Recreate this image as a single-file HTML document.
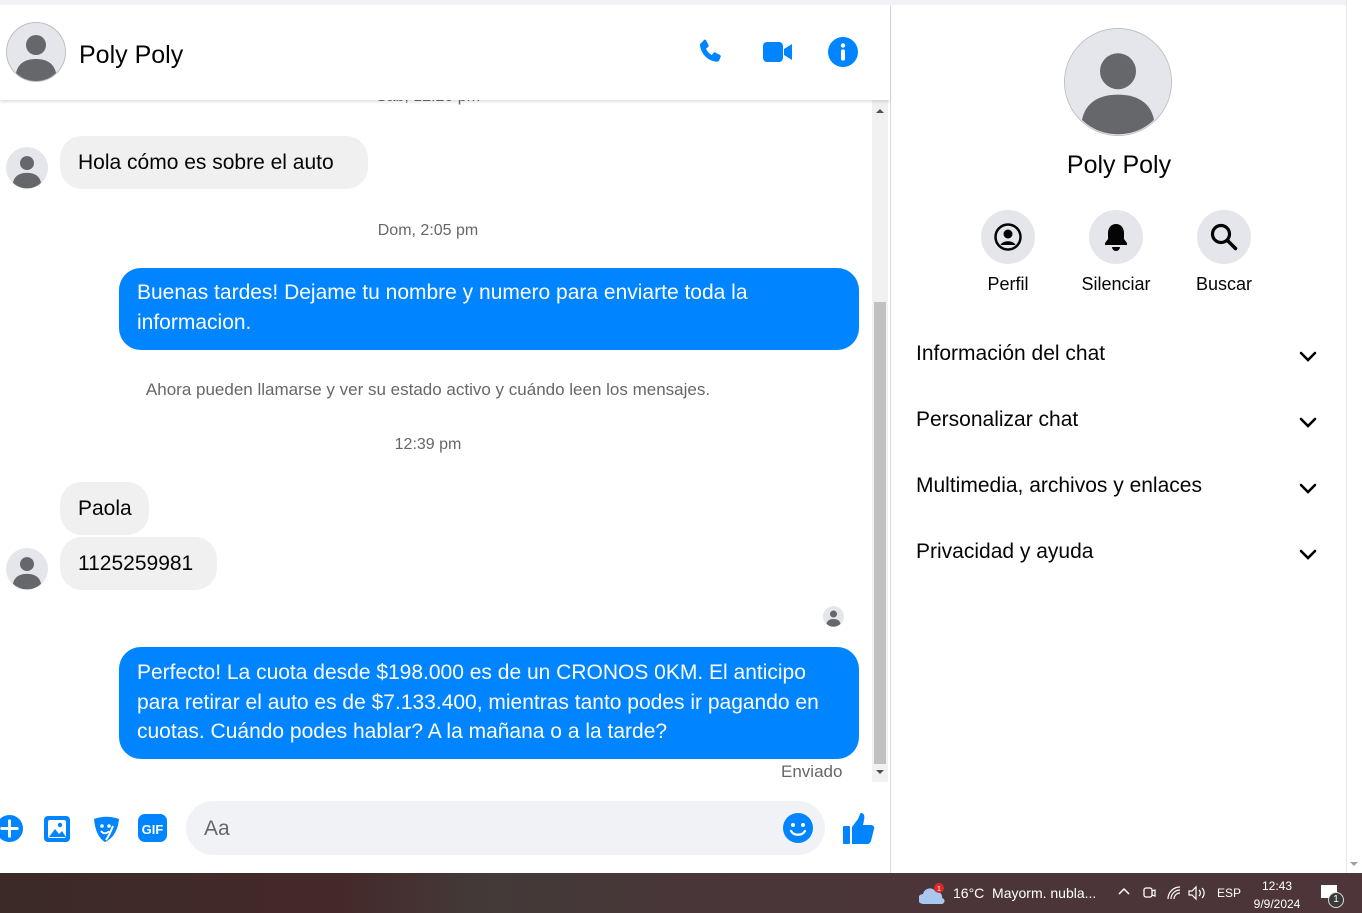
<!DOCTYPE html>
<html><head><meta charset="utf-8"><style>
*{box-sizing:border-box;margin:0;padding:0}
body{width:1362px;height:913px;overflow:hidden;background:#fff;font-family:"Liberation Sans",sans-serif;color:#050505;position:relative}
.abs{position:absolute}
.av{border-radius:50%;background:#c9ccd1;overflow:hidden}
.bub{position:absolute;border-radius:22px;font-size:21px;line-height:29.5px;padding:8px 18px}
.in{background:#f0f0f0;color:#050505}
.out{background:#0084ff;color:#fff}
.ts{position:absolute;font-size:16px;color:#65676b;width:100%;text-align:center}
.row{position:absolute;left:916px;width:402px;font-size:21px;font-weight:500}
.chev{position:absolute;right:0;top:4px}
.tb{position:absolute;color:#fff;font-size:14px}
</style></head><body>
<div class="abs" style="left:0;top:0;width:1346px;height:5px;background:#f0f2f5"></div>
<div class="abs" style="left:0;top:5px;width:890px;height:95px;background:#fff;box-shadow:0 2px 3px rgba(0,0,0,.12);z-index:2">
 <svg class="abs" style="left:6px;top:17px" width="60" height="60" viewBox="0 0 60 60"><circle cx="30" cy="30" r="30" fill="#bcc0c4"/><circle cx="30" cy="30" r="29" fill="#e4e6eb"/><circle cx="30" cy="23" r="10" fill="#65676b"/><path d="M10 51c2-10 10-14 20-14s18 4 20 14c-5 5-12 8-20 8s-15-3-20-8z" fill="#65676b"/></svg>
 <div class="abs" style="left:79px;top:36px;font-size:25px;font-weight:500">Poly Poly</div>
 <svg class="abs" style="left:696px;top:32px" width="30" height="30" viewBox="0 0 24 24"><path fill="#0084ff" d="M6.6 2.2c.6-.3 1.3 0 1.6.6l1.8 3.6c.3.6.1 1.2-.4 1.6L8 9.3c.9 2.3 2.5 4.1 4.7 5.1l1.2-1.6c.4-.5 1.1-.6 1.6-.3l3.6 1.8c.6.3.8 1 .6 1.6l-1 2.5c-.4 1-1.5 1.6-2.6 1.4C9.2 18.7 4.3 13.8 3.2 6.9c-.2-1.1.4-2.1 1.4-2.5z"/></svg>
 <svg class="abs" style="left:762px;top:34px" width="32" height="26" viewBox="0 0 32 26"><rect x="1" y="3" width="20" height="20" rx="4" fill="#0084ff"/><path d="M22 10l8-5v16l-8-5z" fill="#0084ff"/></svg>
 <svg class="abs" style="left:828px;top:32px" width="30" height="30" viewBox="0 0 30 30"><circle cx="15" cy="15" r="15" fill="#0084ff"/><circle cx="15" cy="8.5" r="2.2" fill="#fff"/><rect x="13" y="12.5" width="4" height="11" rx="1.5" fill="#fff"/></svg>
</div>
<div class="abs" style="left:0;top:100px;width:872px;height:682px;overflow:hidden">
 <div class="ts" style="top:-12px;left:-8px;font-weight:500">Sáb, 12:20 pm</div>
 <svg class="abs" style="left:6px;top:47px" width="42" height="42" viewBox="0 0 60 60"><circle cx="30" cy="30" r="30" fill="#e4e6eb"/><circle cx="30" cy="23" r="10" fill="#65676b"/><path d="M10 51c2-10 10-14 20-14s18 4 20 14c-5 5-12 8-20 8s-15-3-20-8z" fill="#65676b"/></svg>
 <div class="bub in" style="left:60px;top:36px;height:53px;padding-top:12px;width:308px">Hola cómo es sobre el auto</div>
 <div class="ts" style="top:122px;left:-8px;font-weight:500">Dom, 2:05 pm</div>
 <div class="bub out" style="left:119px;top:168px;width:740px;height:82px;padding-top:10px">Buenas tardes! Dejame tu nombre y numero para enviarte toda la informacion.</div>
 <div class="ts" style="top:280px;left:-8px;font-size:17px;color:#65676b;font-weight:500">Ahora pueden llamarse y ver su estado activo y cuándo leen los mensajes.</div>
 <div class="ts" style="top:336px;left:-8px;font-weight:500">12:39 pm</div>
 <div class="bub in" style="left:60px;top:382px;height:53px;padding-top:12px;width:89px">Paola</div>
 <svg class="abs" style="left:6px;top:448px" width="42" height="42" viewBox="0 0 60 60"><circle cx="30" cy="30" r="30" fill="#e4e6eb"/><circle cx="30" cy="23" r="10" fill="#65676b"/><path d="M10 51c2-10 10-14 20-14s18 4 20 14c-5 5-12 8-20 8s-15-3-20-8z" fill="#65676b"/></svg>
 <div class="bub in" style="left:60px;top:437px;height:53px;padding-top:12px;width:157px">1125259981</div>
 <svg class="abs" style="left:823px;top:506px" width="21" height="21" viewBox="0 0 60 60"><circle cx="30" cy="30" r="30" fill="#e4e6eb"/><circle cx="30" cy="23" r="10" fill="#65676b"/><path d="M10 51c2-10 10-14 20-14s18 4 20 14c-5 5-12 8-20 8s-15-3-20-8z" fill="#65676b"/></svg>
 <div class="bub out" style="left:119px;top:547px;width:740px;height:112px;padding-top:11px;padding-right:40px">Perfecto! La cuota desde $198.000 es de un CRONOS 0KM. El anticipo para retirar el auto es de $7.133.400, mientras tanto podes ir pagando en cuotas. Cuándo podes hablar? A la mañana o a la tarde?</div>
 <div class="abs" style="left:781px;top:662px;font-size:17px;color:#65676b">Enviado</div>
</div>
<div class="abs" style="left:872px;top:100px;width:16px;height:682px;background:#f1f1f1"></div>
<div class="abs" style="left:874px;top:302px;width:12px;height:462px;background:#c1c1c1"></div>
<div class="abs" style="left:876px;top:105px;width:0;height:0;border:4px solid transparent;border-bottom-color:#505050"></div>
<div class="abs" style="left:876px;top:770px;width:0;height:0;border:4px solid transparent;border-top-color:#505050"></div>
<svg class="abs" style="left:-5px;top:814px" width="29" height="29" viewBox="0 0 30 30"><circle cx="15" cy="15" r="14" fill="#0084ff"/><path d="M15 7v16M7 15h16" stroke="#fff" stroke-width="3" stroke-linecap="round"/></svg>
<svg class="abs" style="left:43px;top:813px" width="30" height="31" viewBox="0 0 30 31"><rect x="1" y="3" width="26" height="26" rx="4" fill="#0084ff"/><rect x="5" y="7" width="18" height="18" rx="2" fill="#fff"/><path d="M6 24l6-8 4 5 3-3 4 6z" fill="#0084ff"/><circle cx="17" cy="12" r="2.2" fill="#0084ff"/></svg>
<svg class="abs" style="left:91px;top:814px" width="30" height="30" viewBox="0 0 30 30"><path d="M3 5c8-3 17-3 25 0-1 10-5 19-14 23C7 24 4 15 3 5z" fill="#0084ff"/><circle cx="11" cy="12" r="1.8" fill="#fff"/><circle cx="18" cy="12" r="1.8" fill="#fff"/><path d="M10 17c2 3 6 3 8 0M22 12c-2 5-4 10-7 14" stroke="#fff" stroke-width="2" fill="none"/></svg>
<svg class="abs" style="left:138px;top:814px" width="30" height="29" viewBox="0 0 30 29"><rect x="0" y="0" width="29" height="28" rx="7" fill="#0084ff"/><text x="14.5" y="20" font-family="Liberation Sans" font-weight="bold" font-size="13" fill="#fff" text-anchor="middle">GIF</text></svg>
<div class="abs" style="left:186px;top:801px;width:639px;height:54px;border-radius:27px;background:#f0f2f5"></div>
<div class="abs" style="left:204px;top:817px;font-size:21px;color:#65676b">Aa</div>
<svg class="abs" style="left:782px;top:812px" width="32" height="32" viewBox="0 0 32 32"><circle cx="16" cy="16" r="15" fill="#0084ff"/><circle cx="11" cy="13" r="2" fill="#fff"/><circle cx="21" cy="13" r="2" fill="#fff"/><path d="M9 19c3 5 11 5 14 0" stroke="#fff" stroke-width="2.2" fill="none" stroke-linecap="round"/></svg>
<svg class="abs" style="left:842px;top:812px" width="34" height="34" viewBox="0 0 34 34"><rect x="1" y="14" width="7" height="18" rx="1" fill="#0084ff"/><path d="M10 15l6-8c1-2 2-6 3-6 3 0 4 3 3 7l-1 5h8c2 0 4 2 3 4l-3 12c-1 2-2 3-4 3H10z" fill="#0084ff"/></svg>
<div class="abs" style="left:890px;top:5px;width:1px;height:868px;background:#dadde1"></div>
<svg class="abs" style="left:1064px;top:28px" width="108" height="108" viewBox="0 0 60 60"><circle cx="30" cy="30" r="30" fill="#bcc0c4"/><circle cx="30" cy="30" r="29.5" fill="#e4e6eb"/><circle cx="30" cy="24" r="10" fill="#65676b"/><path d="M10 51c2-10 10-14 20-14s18 4 20 14c-5 5-12 8-20 8s-15-3-20-8z" fill="#65676b"/></svg>
<div class="abs" style="left:892px;top:151px;width:454px;text-align:center;font-size:25px;font-weight:500">Poly Poly</div>
<div class="abs av" style="left:981px;top:210px;width:54px;height:54px;background:#e4e6eb"></div>
<svg class="abs" style="left:993px;top:222px" width="30" height="30" viewBox="0 0 30 30"><circle cx="15" cy="15" r="12.5" fill="none" stroke="#050505" stroke-width="2.5"/><circle cx="15" cy="12" r="4.5" fill="#050505"/><path d="M7.5 23c2-5 13-5 15 0" fill="#050505"/></svg>
<div class="abs" style="left:981px;top:274px;width:54px;text-align:center;font-size:18px">Perfil</div>
<div class="abs av" style="left:1089px;top:210px;width:54px;height:54px;background:#e4e6eb"></div>
<svg class="abs" style="left:1102px;top:222px" width="28" height="30" viewBox="0 0 28 30"><path d="M14 2c-5 0-8 4-8 9v6l-3 4v2h22v-2l-3-4v-6c0-5-3-9-8-9z" fill="#050505"/><path d="M10 25a4 4 0 008 0z" fill="#050505"/></svg>
<div class="abs" style="left:1066px;top:274px;width:100px;text-align:center;font-size:18px">Silenciar</div>
<div class="abs av" style="left:1197px;top:210px;width:54px;height:54px;background:#e4e6eb"></div>
<svg class="abs" style="left:1209px;top:222px" width="30" height="30" viewBox="0 0 30 30"><circle cx="12" cy="12" r="8.5" fill="none" stroke="#050505" stroke-width="3.2"/><path d="M18.5 18.5l8 8" stroke="#050505" stroke-width="3.5" stroke-linecap="round"/></svg>
<div class="abs" style="left:1184px;top:274px;width:80px;text-align:center;font-size:18px">Buscar</div>
<div class="row" style="top:342px">Información del chat<svg class="chev" width="20" height="20" viewBox="0 0 20 20"><path d="M3 7l7 7 7-7" stroke="#050505" stroke-width="2.6" fill="none" stroke-linecap="round"/></svg></div>
<div class="row" style="top:408px">Personalizar chat<svg class="chev" width="20" height="20" viewBox="0 0 20 20"><path d="M3 7l7 7 7-7" stroke="#050505" stroke-width="2.6" fill="none" stroke-linecap="round"/></svg></div>
<div class="row" style="top:474px">Multimedia, archivos y enlaces<svg class="chev" width="20" height="20" viewBox="0 0 20 20"><path d="M3 7l7 7 7-7" stroke="#050505" stroke-width="2.6" fill="none" stroke-linecap="round"/></svg></div>
<div class="row" style="top:540px">Privacidad y ayuda<svg class="chev" width="20" height="20" viewBox="0 0 20 20"><path d="M3 7l7 7 7-7" stroke="#050505" stroke-width="2.6" fill="none" stroke-linecap="round"/></svg></div>
<div class="abs" style="left:1346px;top:0;width:16px;height:873px;background:#fff;border-left:1px solid #e8e8e8"></div>
<div class="abs" style="left:1350px;top:862px;width:0;height:0;border:4px solid transparent;border-top-color:#a0a0a0"></div>
<div class="abs" style="left:0;top:873px;width:1362px;height:40px;background:linear-gradient(90deg,#3b2a27 0%,#45292a 25%,#433a38 35%,#4a3538 55%,#4d3539 100%)"></div>
<svg class="abs" style="left:919px;top:882px" width="28" height="24" viewBox="0 0 28 24"><path d="M4 22a5 5 0 010-10 7 7 0 0113-2 5 5 0 016 6 3 3 0 01-1 6z" fill="#a9c8ee"/><circle cx="20" cy="6" r="5" fill="#d62a2a"/><text x="20" y="9" font-size="7" fill="#fff" text-anchor="middle" font-family="Liberation Sans">1</text></svg>
<div class="tb" style="left:953px;top:885px">16°C&nbsp; Mayorm. nubla...</div>
<svg class="abs" style="left:1117px;top:886px" width="14" height="10" viewBox="0 0 14 10"><path d="M2 8l5-5 5 5" stroke="#fff" stroke-width="1.5" fill="none"/></svg>
<svg class="abs" style="left:1142px;top:884px" width="14" height="18" viewBox="0 0 14 18"><rect x="2" y="4" width="8" height="9" rx="2" fill="none" stroke="#fff" stroke-width="1.3"/><path d="M10 7l3-1v6l-3-1" fill="none" stroke="#fff" stroke-width="1.2"/></svg>
<svg class="abs" style="left:1166px;top:885px" width="16" height="16" viewBox="0 0 16 16"><path d="M2 14a12 12 0 0112-12M5 14a9 9 0 019-9M8 14a6 6 0 016-6" stroke="#fff" stroke-width="1.2" fill="none"/></svg>
<svg class="abs" style="left:1187px;top:885px" width="20" height="16" viewBox="0 0 20 16"><path d="M2 6h3l4-4v12l-4-4H2z" fill="none" stroke="#fff" stroke-width="1.2"/><path d="M12 5a4 4 0 010 6M15 3a7 7 0 010 10" stroke="#fff" stroke-width="1.2" fill="none"/></svg>
<div class="abs" style="left:1217px;top:886px;font-size:12px;color:#fff">ESP</div>
<div class="abs" style="left:1250px;top:877px;width:54px;text-align:center;font-size:12px;color:#fff;line-height:18px">12:43<br>9/9/2024</div>
<div class="abs" style="left:1321px;top:885px;width:16px;height:13px;background:#fff"></div>
<div class="abs" style="left:1328px;top:892px;width:16px;height:16px;border-radius:50%;background:#3b3b3b;border:1px solid #ddd;color:#fff;font-size:10px;text-align:center;line-height:14px">1</div>
</body></html>
